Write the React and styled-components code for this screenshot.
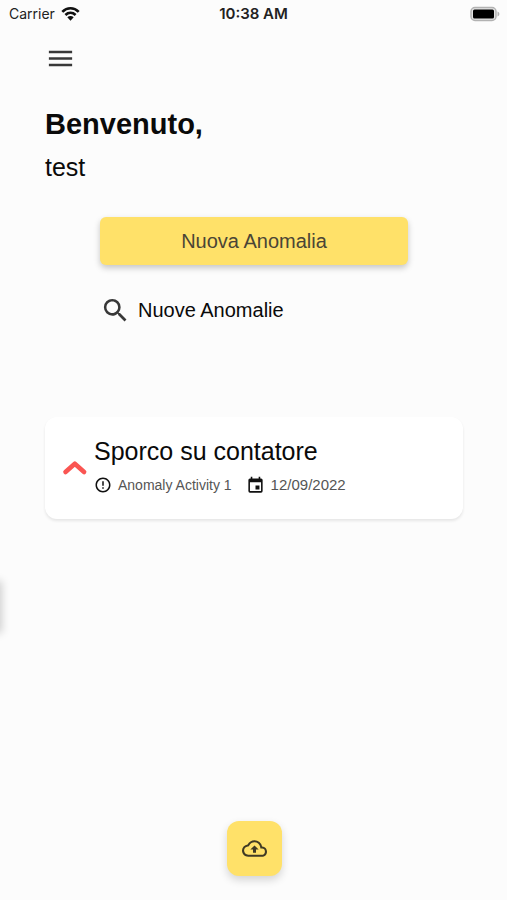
import React from "react";
import styled, { createGlobalStyle } from "styled-components";

const GlobalStyle = createGlobalStyle`
  * { box-sizing: border-box; }
  body {
    margin: 0;
    background: #fcfcfc;
    color: #0a0a0a;
    font-family: "Liberation Sans", Arial, sans-serif;
  }
  h1, h2, p { margin: 0; font-weight: 400; }
  button { border: 0; padding: 0; background: none; font: inherit; cursor: pointer; }
  svg { display: block; flex: none; }
`;

const Screen = styled.div`
  position: relative;
  display: flex;
  flex-direction: column;
  min-height: 100vh;
  overflow: hidden;
`;

const StatusBar = styled.header`
  display: grid;
  grid-template-columns: 1fr auto 1fr;
  align-items: center;
  height: 28px;
  padding: 0 7px;
  font: 500 14px/20px Inter, sans-serif;
  color: #222;
`;

const Carrier = styled.div`
  display: flex;
  align-items: center;
  gap: 6px;
  padding-left: 2px;
  font-weight: 400;
`;

const Clock = styled.time`
  font-size: 15px;
  font-weight: 600;
`;

const Battery = styled.div`
  justify-self: end;
`;

const Content = styled.main`
  display: flex;
  flex: 1;
  flex-direction: column;
  padding: 15px 44px 24px 45px;
`;

const MenuButton = styled.button`
  align-self: flex-start;
  color: #383838;
`;

const Title = styled.h1`
  margin-top: 32px;
  font-size: 29px;
  font-weight: 700;
  line-height: 36px;
`;

const UserName = styled.p`
  margin-top: 9px;
  font-size: 25px;
  line-height: 32px;
`;

const Actions = styled.section`
  display: flex;
  flex-direction: column;
  margin-top: 34px;
  padding: 0 55px;
`;

const PrimaryButton = styled.button`
  height: 48px;
  border-radius: 6px;
  background: #ffe169;
  box-shadow: 0 3px 6px rgba(0, 0, 0, 0.22);
  color: #4a4536;
  && { font-size: 20px; }
`;

const SearchButton = styled.button`
  display: flex;
  align-items: center;
  align-self: flex-start;
  gap: 7px;
  margin-top: 29px;
  color: #0a0a0a;
  && { font-size: 20px; line-height: 32px; }
`;

const Card = styled.article`
  display: flex;
  align-items: center;
  gap: 4px;
  min-height: 102px;
  margin-top: 91px;
  padding: 0 16px;
  border-radius: 12px;
  background: #fff;
  box-shadow: 0 2px 3px rgba(0, 0, 0, 0.09);
`;

const CardBody = styled.div`
  padding-bottom: 6px;
`;

const CardTitle = styled.h2`
  font-size: 25px;
  line-height: 32px;
`;

const Details = styled.div`
  display: flex;
  align-items: center;
  gap: 14px;
  margin-top: 8px;
`;

const Detail = styled.div`
  display: flex;
  align-items: center;
  gap: 6px;
  color: #555;
  font-size: ${({ $size }) => $size}px;
  line-height: 20px;
`;

const UploadButton = styled.button`
  display: grid;
  place-items: center;
  align-self: center;
  width: 55px;
  height: 55px;
  margin-top: auto;
  border-radius: 12px;
  background: #ffe169;
  box-shadow: 0 4px 8px rgba(0, 0, 0, 0.16);
  color: #403a24;
`;

const DrawerEdge = styled.div`
  position: absolute;
  top: 581px;
  left: -10px;
  width: 10px;
  height: 48px;
  box-shadow: 0 2px 8px 2px rgba(0, 0, 0, 0.18);
`;

const Glyph = ({ size, color = "currentColor", children }) => (
  <svg width={size} height={size} viewBox="0 0 24 24" fill={color} aria-hidden="true">
    {children}
  </svg>
);

const WifiIcon = () => (
  <svg width="19" height="16" viewBox="0 0 19 16" fill="none" stroke="#111" strokeWidth="2.600" aria-hidden="true">
    <path d="M1.300 5.800C6 1 13 1 17.700 5.800" />
    <path d="M4.400 9C7.400 6.200 11.600 6.200 14.600 9" />
    <path d="M6.300 11.300 9.500 14.800l3.200-3.500C10.900 9.700 8.100 9.700 6.300 11.300Z" fill="#111" stroke="none" />
  </svg>
);

const BatteryIcon = () => (
  <svg width="30" height="16" viewBox="0 0 30 16" role="img" aria-label="Battery full">
    <rect x="1" y="1.500" width="25" height="13" rx="4" fill="#e4e4e4" stroke="#b2b2b2" strokeWidth="1.500" />
    <rect x="3" y="3.500" width="21" height="9" rx="1.500" fill="#000" />
    <path d="M27.500 5.500v5c2.500-.7 2.500-4.300 0-5Z" fill="#b2b2b2" />
  </svg>
);

const ChevronIcon = () => (
  <svg width="29" height="24" viewBox="0 0 29 24" fill="none" stroke="#fa5552" strokeWidth="4.600" strokeLinecap="round" strokeLinejoin="round" role="img" aria-label="High priority">
    <path d="m4.500 16 9.300-8.300 9.300 8.300" />
  </svg>
);

export default function App() {
  return (
    <>
      <GlobalStyle />
      <Screen>
        <StatusBar>
          <Carrier>Carrier <WifiIcon /></Carrier>
          <Clock>10:38 AM</Clock>
          <Battery><BatteryIcon /></Battery>
        </StatusBar>
        <Content>
          <MenuButton aria-label="Menu">
            <Glyph size={31}><path d="M3 18h18v-2H3v2Zm0-5h18v-2H3v2Zm0-7v2h18V6H3Z" /></Glyph>
          </MenuButton>
          <Title>Benvenuto,</Title>
          <UserName>test</UserName>
          <Actions>
            <PrimaryButton>Nuova Anomalia</PrimaryButton>
            <SearchButton>
              <Glyph size={31} color="#383838">
                <path d="M15.500 14h-.79l-.28-.27A6.470 6.470 0 0 0 16 9.500 6.500 6.500 0 1 0 9.500 16c1.610 0 3.090-.59 4.230-1.570l.27.28v.79l5 4.990L20.490 19l-4.990-5Zm-6 0C7.010 14 5 11.990 5 9.500S7.010 5 9.500 5 14 7.010 14 9.500 11.990 14 9.500 14Z" />
              </Glyph>
              Nuove Anomalie
            </SearchButton>
          </Actions>
          <Card>
            <ChevronIcon />
            <CardBody>
              <CardTitle>Sporco su contatore</CardTitle>
              <Details>
                <Detail $size={14}>
                  <Glyph size={18} color="#111">
                    <path d="M11 15h2v2h-2v-2Zm0-8h2v6h-2V7Zm.99-5C6.470 2 2 6.480 2 12s4.470 10 9.990 10C17.520 22 22 17.520 22 12S17.520 2 11.990 2ZM12 20a8 8 0 1 1 0-16 8 8 0 0 1 0 16Z" />
                  </Glyph>
                  Anomaly Activity 1
                </Detail>
                <Detail $size={15}>
                  <Glyph size={19} color="#111">
                    <path d="M17 12h-5v5h5v-5ZM16 1v2H8V1H6v2H5a2 2 0 0 0-1.990 2L3 19a2 2 0 0 0 2 2h14a2 2 0 0 0 2-2V5a2 2 0 0 0-2-2h-1V1h-2Zm3 18H5V8h14v11Z" />
                  </Glyph>
                  12/09/2022
                </Detail>
              </Details>
            </CardBody>
          </Card>
          <UploadButton aria-label="Carica">
            <Glyph size={25}>
              <path d="M19.350 10.040A7.490 7.490 0 0 0 12 4C9.110 4 6.600 5.640 5.350 8.040A5.994 5.994 0 0 0 0 14c0 3.310 2.690 6 6 6h13c2.760 0 5-2.240 5-5 0-2.640-2.050-4.780-4.650-4.960ZM19 18H6c-2.210 0-4-1.790-4-4 0-2.050 1.530-3.760 3.560-3.970l1.070-.11.5-.95A5.469 5.469 0 0 1 12 6c2.620 0 4.880 1.860 5.390 4.430l.3 1.500 1.530.11A2.980 2.980 0 0 1 22 15c0 1.650-1.350 3-3 3ZM8 13h2.550v3h2.900v-3H16l-4-4-4 4Z" />
            </Glyph>
          </UploadButton>
        </Content>
        <DrawerEdge aria-hidden="true" />
      </Screen>
    </>
  );
}
